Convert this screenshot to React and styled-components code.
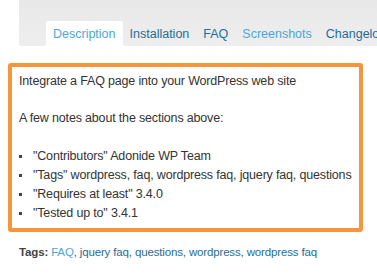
import styled, { createGlobalStyle } from "styled-components";

const Global = createGlobalStyle`
  body {
    margin: 0;
    background: #fff;
    font-family: "Helvetica Neue", "Liberation Sans", Arial, sans-serif;
    color: #333;
  }
`;

const Page = styled.div`
  width: 377px;
  height: 276px;
  overflow: hidden;
`;

const TabBar = styled.div`
  margin-left: 19px;
  height: 46px;
  background: linear-gradient(#e8e8e8, #eeeeee);
  display: flex;
  align-items: flex-end;
  padding-left: 27px;
  white-space: nowrap;
`;

const Tab = styled.a`
  display: flex;
  align-items: center;
  height: 25px;
  padding: 0 7px;
  font-size: 12.5px;
  text-decoration: none;
  color: ${({ light }) => (light ? "#4ea6d6" : "#1f6c98")};
  background: ${({ active }) => (active ? "#fff" : "transparent")};
  border-radius: 2px 2px 0 0;
`;

const Box = styled.div`
  margin: 17px 14px 0 8px;
  height: 169px;
  box-sizing: border-box;
  border: 4px solid #f7953a;
  border-radius: 3px;
  padding: 5px 7px;
  font-size: 12.5px;
  letter-spacing: -0.17px;
  line-height: 19px;
  white-space: nowrap;
`;

const Para = styled.p`
  margin: 0 0 18px;
`;

const List = styled.ul`
  list-style: none;
  margin: 19px 0 0;
  padding: 0;
`;

const Item = styled.li`
  position: relative;
  padding-left: 14px;
  &::before {
    content: "";
    position: absolute;
    left: 0;
    top: 8px;
    width: 3px;
    height: 3px;
    background: #444;
  }
`;

const Tags = styled.div`
  margin: 14px 0 0 19px;
  font-size: 11.5px;
  letter-spacing: -0.15px;
  color: #555;
  white-space: nowrap;
`;

const Label = styled.b`
  color: #444;
`;

const TagLink = styled.a`
  text-decoration: none;
  color: ${({ light }) => (light ? "#4ea6d6" : "#1f6c98")};
`;

const tags = ["FAQ", "jquery faq", "questions", "wordpress", "wordpress faq"];

export default function App() {
  return (
    <Page>
      <Global />
      <TabBar>
        <Tab active light>Description</Tab>
        <Tab>Installation</Tab>
        <Tab>FAQ</Tab>
        <Tab light>Screenshots</Tab>
        <Tab>Changelog</Tab>
      </TabBar>
      <Box>
        <Para>Integrate a FAQ page into your WordPress web site</Para>
        <Para>A few notes about the sections above:</Para>
        <List>
          <Item>"Contributors" Adonide WP Team</Item>
          <Item>"Tags" wordpress, faq, wordpress faq, jquery faq, questions</Item>
          <Item>"Requires at least" 3.4.0</Item>
          <Item>"Tested up to" 3.4.1</Item>
        </List>
      </Box>
      <Tags>
        <Label>Tags: </Label>
        {tags.map((t, i) => (
          <span key={t}>
            <TagLink light={i === 0}>{t}</TagLink>
            {i < tags.length - 1 ? ", " : ""}
          </span>
        ))}
      </Tags>
    </Page>
  );
}
